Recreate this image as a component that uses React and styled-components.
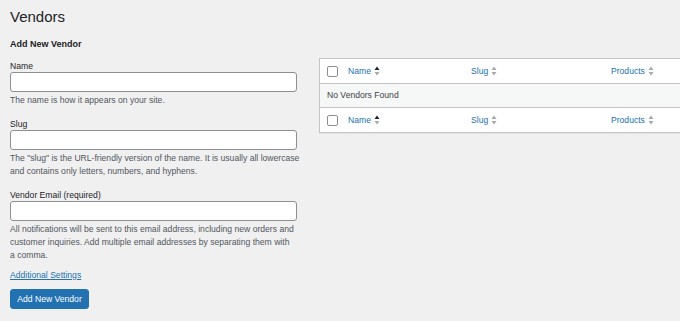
import React from "react";
import styled, { createGlobalStyle } from "styled-components";

const GlobalStyle = createGlobalStyle`
  html, body {
    margin: 0;
    padding: 0;
    overflow: hidden;
    background: #f0f0f1;
  }
  body {
    font-family: "Liberation Sans", Arial, sans-serif;
    font-size: 8.6px;
    line-height: 13px;
    color: #3c434a;
  }
`;

const Wrap = styled.div`
  box-sizing: border-box;
  width: 680px;
  padding-left: 10px;
`;

const Title = styled.h1`
  margin: 0;
  padding: 7px 0 0;
  font-size: 15px;
  line-height: 20px;
  font-weight: 400;
  color: #1d2327;
`;

const Columns = styled.div`
  display: grid;
  grid-template-columns: 287px 1fr;
  column-gap: 22px;
  align-items: start;
`;

const FormCol = styled.div`
  display: flex;
  flex-direction: column;
`;

const SubTitle = styled.h2`
  margin: 11px 0 10px;
  font-size: 9px;
  line-height: 13px;
  font-weight: 700;
  color: #1d2327;
`;

const Field = styled.div`
  display: flex;
  flex-direction: column;
  & + & {
    margin-top: 12px;
  }
`;

const Label = styled.label`
  color: #1d2327;
  line-height: 11px;
`;

const Input = styled.input`
  box-sizing: border-box;
  width: 100%;
  height: 20px;
  margin: 0 0 2px;
  border: 1px solid #8c8f94;
  border-radius: 3px;
  background: #fff;
  padding: 0 6px;
  font: inherit;
`;

const Desc = styled.p`
  margin: 0;
  color: #50575e;
  line-height: 13px;
  white-space: nowrap;
`;

const MoreLink = styled.a`
  color: #2271b1;
  text-decoration: underline;
  margin: 7px 0 7px;
  align-self: flex-start;
`;

const Button = styled.button`
  align-self: flex-start;
  height: 20px;
  width: 79px;
  padding: 0;
  border: 1px solid #2271b1;
  border-radius: 3px;
  background: #2271b1;
  color: #fff;
  font-family: inherit;
  font-size: 8.6px;
`;

const TableCol = styled.div`
  padding-top: 31px;
`;

const Table = styled.div`
  border: 1px solid #c3c4c7;
  border-right: none;
  background: #fff;
  box-shadow: 0 1px 1px rgba(0, 0, 0, 0.04);
`;

const Row = styled.div`
  display: grid;
  grid-template-columns: 19px 123px 140px 1fr;
  align-items: center;
  height: 24px;
  border-top: ${(p) => (p.top ? "1px solid #c3c4c7" : "none")};
  border-bottom: ${(p) => (p.bottom ? "1px solid #c3c4c7" : "none")};
`;

const EmptyRow = styled.div`
  height: 23px;
  display: flex;
  align-items: center;
  padding-left: 7px;
  background: #f6f7f7;
  color: #3c434a;
`;

const Check = styled.span`
  box-sizing: border-box;
  display: block;
  width: 11px;
  height: 11px;
  margin-left: 7px;
  border: 1px solid #8c8f94;
  border-radius: 2px;
  background: #fff;
`;

const Head = styled.a`
  display: flex;
  align-items: center;
  gap: 3px;
  padding-left: 9px;
  color: #2271b1;
  text-decoration: none;
`;

const Sorter = ({ active }) => (
  <svg width="6" height="10" viewBox="0 0 6 10">
    <path d="M3 0.5 L5.5 4 L0.5 4 Z" fill={active ? "#1d2327" : "#a7aaad"} />
    <path d="M0.5 6 L5.5 6 L3 9.5 Z" fill="#a7aaad" />
  </svg>
);

const HeaderRow = ({ top, bottom }) => (
  <Row top={top} bottom={bottom}>
    <Check />
    <Head>
      Name <Sorter active />
    </Head>
    <Head>
      Slug <Sorter />
    </Head>
    <Head>
      Products <Sorter />
    </Head>
  </Row>
);

export default function App() {
  return (
    <>
      <GlobalStyle />
      <Wrap>
        <Title>Vendors</Title>
        <Columns>
          <FormCol>
            <SubTitle>Add New Vendor</SubTitle>
            <Field>
              <Label>Name</Label>
              <Input type="text" />
              <Desc>The name is how it appears on your site.</Desc>
            </Field>
            <Field>
              <Label>Slug</Label>
              <Input type="text" />
              <Desc>
                The "slug" is the URL-friendly version of the name. It is usually all lowercase
                <br />
                and contains only letters, numbers, and hyphens.
              </Desc>
            </Field>
            <Field>
              <Label>Vendor Email (required)</Label>
              <Input type="text" />
              <Desc>
                All notifications will be sent to this email address, including new orders and
                <br />
                customer inquiries. Add multiple email addresses by separating them with
                <br />
                a comma.
              </Desc>
            </Field>
            <MoreLink href="#">Additional Settings</MoreLink>
            <Button>Add New Vendor</Button>
          </FormCol>
          <TableCol>
            <Table>
              <HeaderRow bottom />
              <EmptyRow>No Vendors Found</EmptyRow>
              <HeaderRow top />
            </Table>
          </TableCol>
        </Columns>
      </Wrap>
    </>
  );
}
